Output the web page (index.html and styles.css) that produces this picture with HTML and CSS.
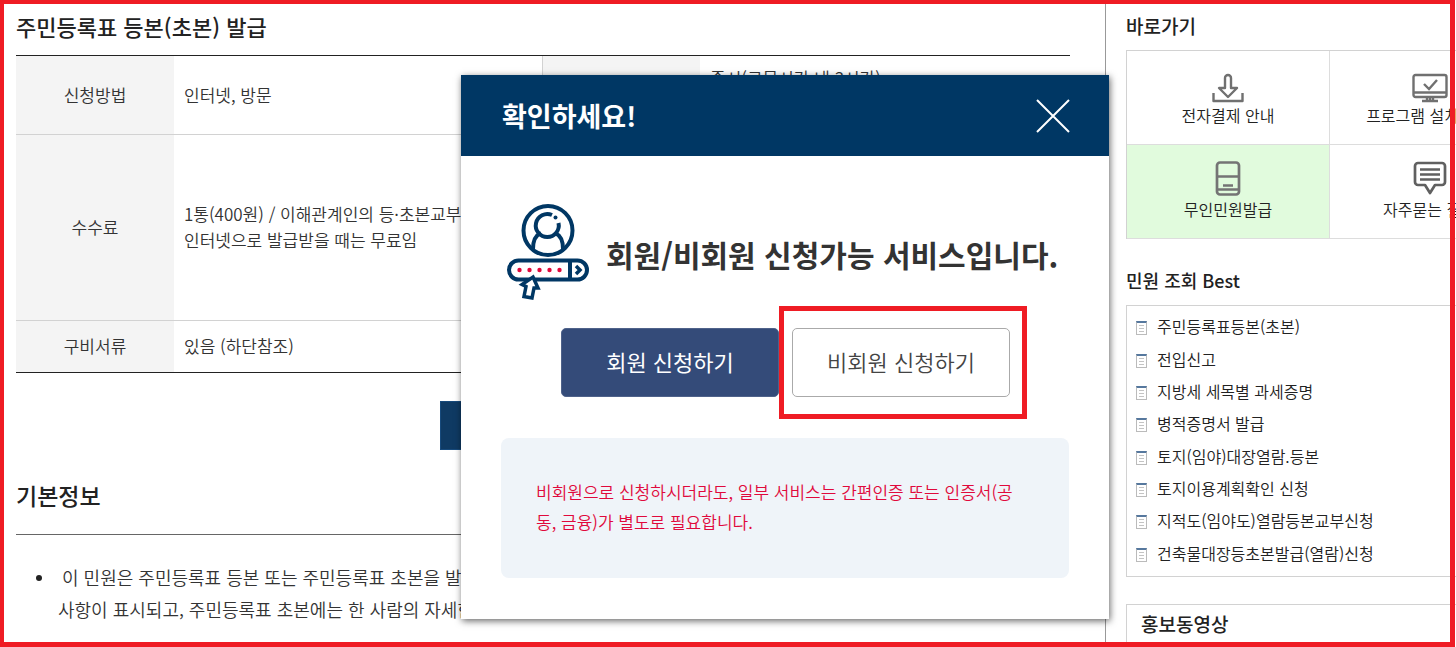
FILE: index.html
```html
<!DOCTYPE html>
<html lang="ko">
<head>
<meta charset="utf-8">
<title>주민등록표 등본(초본) 발급</title>
<link rel="stylesheet" href="styles.css">
</head>
<body>
<div class="page">
  <main class="main">
    <h1 class="title">주민등록표 등본(초본) 발급</h1>
    <table class="info">
      <colgroup><col class="col-label"><col class="col-value"><col class="col-label"><col></colgroup>
      <tr class="row-method">
        <th scope="row">신청방법</th><td>인터넷, 방문</td>
        <th scope="row" class="second"></th><td class="period">즉시(근무시간 내 3시간)<br>&nbsp;</td>
      </tr>
      <tr class="row-fee">
        <th scope="row">수수료</th>
        <td colspan="3">1통(400원) / 이해관계인의 등·초본교부·<br>인터넷으로 발급받을 때는 무료임</td>
      </tr>
      <tr class="row-docs">
        <th scope="row">구비서류</th><td colspan="3">있음 (하단참조)</td>
      </tr>
    </table>
    <button class="issue" type="button" aria-label="발급"></button>
    <h2 class="title section">기본정보</h2>
    <ul class="notes">
      <li>이 민원은 주민등록표 등본 또는 주민등록표 초본을 발급<br>사항이 표시되고, 주민등록표 초본에는 한 사람의 자세한</li>
    </ul>
  </main>

  <aside class="side">
    <h3 class="side-title">바로가기</h3>
    <nav class="shortcuts">
      <a href="#">
        <svg width="32" height="30" viewBox="0 0 32 30" fill="none" stroke="#707070" stroke-width="2.400" stroke-linejoin="round">
          <path d="M13 15V5a3 3 0 0 1 6 0v10h6l-9 9-9-9z"/><path d="M1.500 20v8h29v-8"/>
        </svg>
        <span>전자결제 안내</span>
      </a>
      <a href="#">
        <svg width="36" height="30" viewBox="0 0 36 30" fill="none" stroke="#707070" stroke-width="2.400">
          <rect x="1.500" y="2" width="33" height="22" rx="2"/><path d="M1 19.500h34"/><path d="M12 11l5 5 8-9"/><path d="M15 24v4M21 24v4M10 28h16M18 24v4"/>
        </svg>
        <span>프로그램 설치 안내</span>
      </a>
      <a href="#" class="active">
        <svg width="26" height="36" viewBox="0 0 26 36" fill="none" stroke="#747474" stroke-width="2.700">
          <rect x="2" y="1.500" width="22" height="32" rx="3"/><path d="M2 15.500h22M2 28.500h22M8 24.500h10"/>
        </svg>
        <span>무인민원발급</span>
      </a>
      <a href="#">
        <svg width="34" height="36" viewBox="0 0 34 36" fill="none" stroke="#606060" stroke-width="2.700" stroke-linejoin="round">
          <path d="M5 2h24a3 3 0 0 1 3 3v16a3 3 0 0 1-3 3h-7l-5 8-5-8H5a3 3 0 0 1-3-3V5a3 3 0 0 1 3-3z"/><path d="M7 8.500h20M7 13.500h20M7 18.500h20"/>
        </svg>
        <span>자주묻는 질문</span>
      </a>
    </nav>
    <h3 class="side-title best-title">민원 조회 Best</h3>
    <ul class="best">
      <li><a href="#">주민등록표등본(초본)</a></li>
      <li><a href="#">전입신고</a></li>
      <li><a href="#">지방세 세목별 과세증명</a></li>
      <li><a href="#">병적증명서 발급</a></li>
      <li><a href="#">토지(임야)대장열람.등본</a></li>
      <li><a href="#">토지이용계획확인 신청</a></li>
      <li><a href="#">지적도(임야도)열람등본교부신청</a></li>
      <li><a href="#">건축물대장등초본발급(열람)신청</a></li>
    </ul>
    <section class="promo"><h3 class="side-title">홍보동영상</h3></section>
  </aside>

  <div class="modal" role="dialog" aria-labelledby="modal-title">
    <header class="modal-head">
      <h2 id="modal-title">확인하세요!</h2>
      <button class="close" type="button" aria-label="닫기">
        <svg width="36" height="36" viewBox="0 0 36 36" stroke="#fff" stroke-width="2"><path d="M2 2l32 32M34 2L2 34"/></svg>
      </button>
    </header>
    <div class="modal-body">
      <div class="lead">
        <svg width="84" height="98" viewBox="0 0 84 98" fill="none" stroke="#003764" stroke-width="4">
          <circle cx="42" cy="27.500" r="24.500"/>
          <path d="M46 12a11.500 11.500 0 1 0 6.500 8"/>
          <circle cx="49.500" cy="14.500" r="2" fill="#003764" stroke="none"/>
          <path d="M27 46c0-9 3-14 8-16M57 46c0-9-3-14-8-16"/>
          <rect x="3" y="57.500" width="78" height="19" rx="9.500"/>
          <path d="M64 58v19"/><path d="M70 63l4 4-4 4" stroke-width="3.500"/>
          <g fill="#e0093c" stroke="none"><circle cx="13.500" cy="67" r="2.200"/><circle cx="23.500" cy="67" r="2.200"/><circle cx="33.500" cy="67" r="2.200"/><circle cx="43.500" cy="67" r="2.200"/><circle cx="53.500" cy="67" r="2.200"/></g>
          <path d="M27 74l5 11-4 0-2 10-8-1.500 2-10-4-2z" fill="#fff" stroke-width="3.500"/>
        </svg>
        <p>회원/비회원 신청가능 서비스입니다.</p>
      </div>
      <div class="actions">
        <button class="btn primary" type="button">회원 신청하기</button>
        <div class="marked"><button class="btn" type="button">비회원 신청하기</button></div>
      </div>
      <p class="notice">비회원으로 신청하시더라도, 일부 서비스는 간편인증 또는 인증서(공동, 금융)가 별도로 필요합니다.</p>
    </div>
  </div>
  <div class="frame"></div>
</div>
</body>
</html>
```
FILE: styles.css
```css
*, *::before, *::after { box-sizing: border-box; }
body, h1, h2, h3, p, ul { margin: 0; padding: 0; }
body {
  font-family: "Noto Sans CJK KR", "Noto Sans", sans-serif;
  font-size: 18px;
  font-weight: 350;
  color: #333;
  background: #fff;
}
button { font: inherit; padding: 0; cursor: pointer; }
a { color: inherit; text-decoration: none; }
ul { list-style: none; }

.page {
  position: relative;
  display: grid;
  grid-template-columns: minmax(0, 1fr) 351px;
  height: 100vh;
  overflow: hidden;
}
.frame {
  position: absolute;
  inset: 0 1px 0 0;
  border: solid #ef1c24;
  border-width: 4px 5px 5px 4px;
  pointer-events: none;
}

.main { padding: 0 35px 0 16px; }
.title {
  height: 56px;
  line-height: 52px;
  font-size: 22px;
  font-weight: 500;
  color: #222;
  border-bottom: 1px solid #222;
}
.info {
  width: 100%;
  table-layout: fixed;
  border-collapse: collapse;
  border-bottom: 1px solid #222;
  font-size: 17px;
  line-height: 26px;
}
.col-label { width: 158px; }
.col-value { width: 368px; }
.info th {
  padding: 0;
  font-weight: 350;
  background: #f4f4f4;
}
.info td { padding: 0 10px; }
.info .period { padding-bottom: 8px; }
.info tr + tr { border-top: 1px solid #d2d2d2; }
.info .second { border-left: 1px solid #d2d2d2; }
.row-method { height: 78px; }
.row-fee { height: 186px; }
.row-docs { height: 52px; }
.issue {
  display: block;
  width: 206px;
  height: 49px;
  margin: 28px auto 0;
  border: 1px solid #174a7c;
  background: #0f3a63;
}
.section {
  height: 66px;
  margin-top: 19px;
  font-size: 23px;
  border-color: #666;
}
.notes {
  padding: 26px 0 0 46px;
  line-height: 32px;
}
.notes li {
  position: relative;
  margin-left: -4px;
  text-indent: 4px;
  white-space: nowrap;
}
.notes li::before {
  content: "";
  position: absolute;
  left: -22px;
  top: 14px;
  width: 6px;
  height: 6px;
  border-radius: 50%;
  background: #222;
}

.side {
  padding-left: 20px;
  border-left: 1px solid #999;
  overflow: hidden;
}
.side-title {
  line-height: 26px;
  font-size: 19px;
  font-weight: 500;
  color: #222;
}
.side > .side-title { padding-top: 13px; }
.shortcuts {
  display: grid;
  grid-template-columns: 203px 200px;
  grid-template-rows: 94px 94px;
  width: 404px;
  margin-top: 11px;
  border: solid #d2d2d2;
  border-width: 1px 0 0 1px;
  font-size: 16px;
  line-height: 24px;
  color: #222;
}
.shortcuts a {
  display: flex;
  flex-direction: column;
  align-items: center;
  justify-content: flex-end;
  padding-bottom: 17px;
  border: solid #ddd;
  border-width: 0 1px 1px 0;
}
.shortcuts .active { background: #e1fbdd; }
.side > .best-title { padding-top: 28px; font-size: 18px; }
.best {
  display: grid;
  grid-template-rows: repeat(8, 1fr);
  width: 404px;
  height: 272px;
  margin-top: 12px;
  padding: 4px 9px 7px;
  border: 1px solid #d2d2d2;
  font-size: 16px;
  color: #222;
}
.best li { display: flex; align-items: center; gap: 10px; }
.best li::before {
  content: "";
  width: 11px;
  height: 14px;
  margin-top: 4px;
  padding: 2px;
  border: 1px solid #bbb;
  border-top: 2px solid #56789e;
  background: repeating-linear-gradient(#c4c4c4 0 1px, #fff 1px 3px) content-box #fff;
}
.promo {
  width: 404px;
  height: 80px;
  margin-top: 27px;
  padding: 6px 14px;
  border: 1px solid #d2d2d2;
}

.modal {
  position: absolute;
  left: 461px;
  top: 75px;
  width: 648px;
  background: #fff;
  box-shadow: 1px 2px 7px rgba(0, 0, 0, 0.6);
}
.modal-head {
  display: flex;
  align-items: center;
  justify-content: space-between;
  height: 81px;
  padding: 0 38px 0 41px;
  color: #fff;
  background: #003764;
}
.modal-head h2 { font-size: 27px; font-weight: 700; line-height: 40px; }
.close { height: 36px; border: 0; background: none; }
.close svg, .lead svg, .shortcuts svg { display: block; }
.modal-body { padding: 47px 40px 41px; }
.lead {
  display: flex;
  align-items: center;
  gap: 16px;
  padding-left: 5px;
  font-size: 30px;
  font-weight: 700;
  line-height: 46px;
  white-space: nowrap;
}
.lead svg { flex-shrink: 0; }
.lead p { padding-top: 4px; }
.actions {
  display: flex;
  gap: 13px;
  padding: 27px 0 41px 60px;
}
.btn {
  display: block;
  width: 218px;
  height: 69px;
  padding-bottom: 4px;
  border: 1px solid #aaa;
  border-radius: 5px;
  font-size: 22px;
  color: #444;
  background: #fff;
}
.primary { color: #fff; font-weight: 400; border-color: #4f628a; background: #344b79; }
.marked { position: relative; }
.marked::after {
  content: "";
  position: absolute;
  inset: -22px -17px -22px -13px;
  border: 5px solid #ef1c24;
  pointer-events: none;
}
.notice {
  padding: 39px 50px 41px 35px;
  font-size: 17px;
  line-height: 30px;
  border-radius: 8px;
  color: #e0093c;
  background: #eff4f9;
  word-break: break-all;
}
```
